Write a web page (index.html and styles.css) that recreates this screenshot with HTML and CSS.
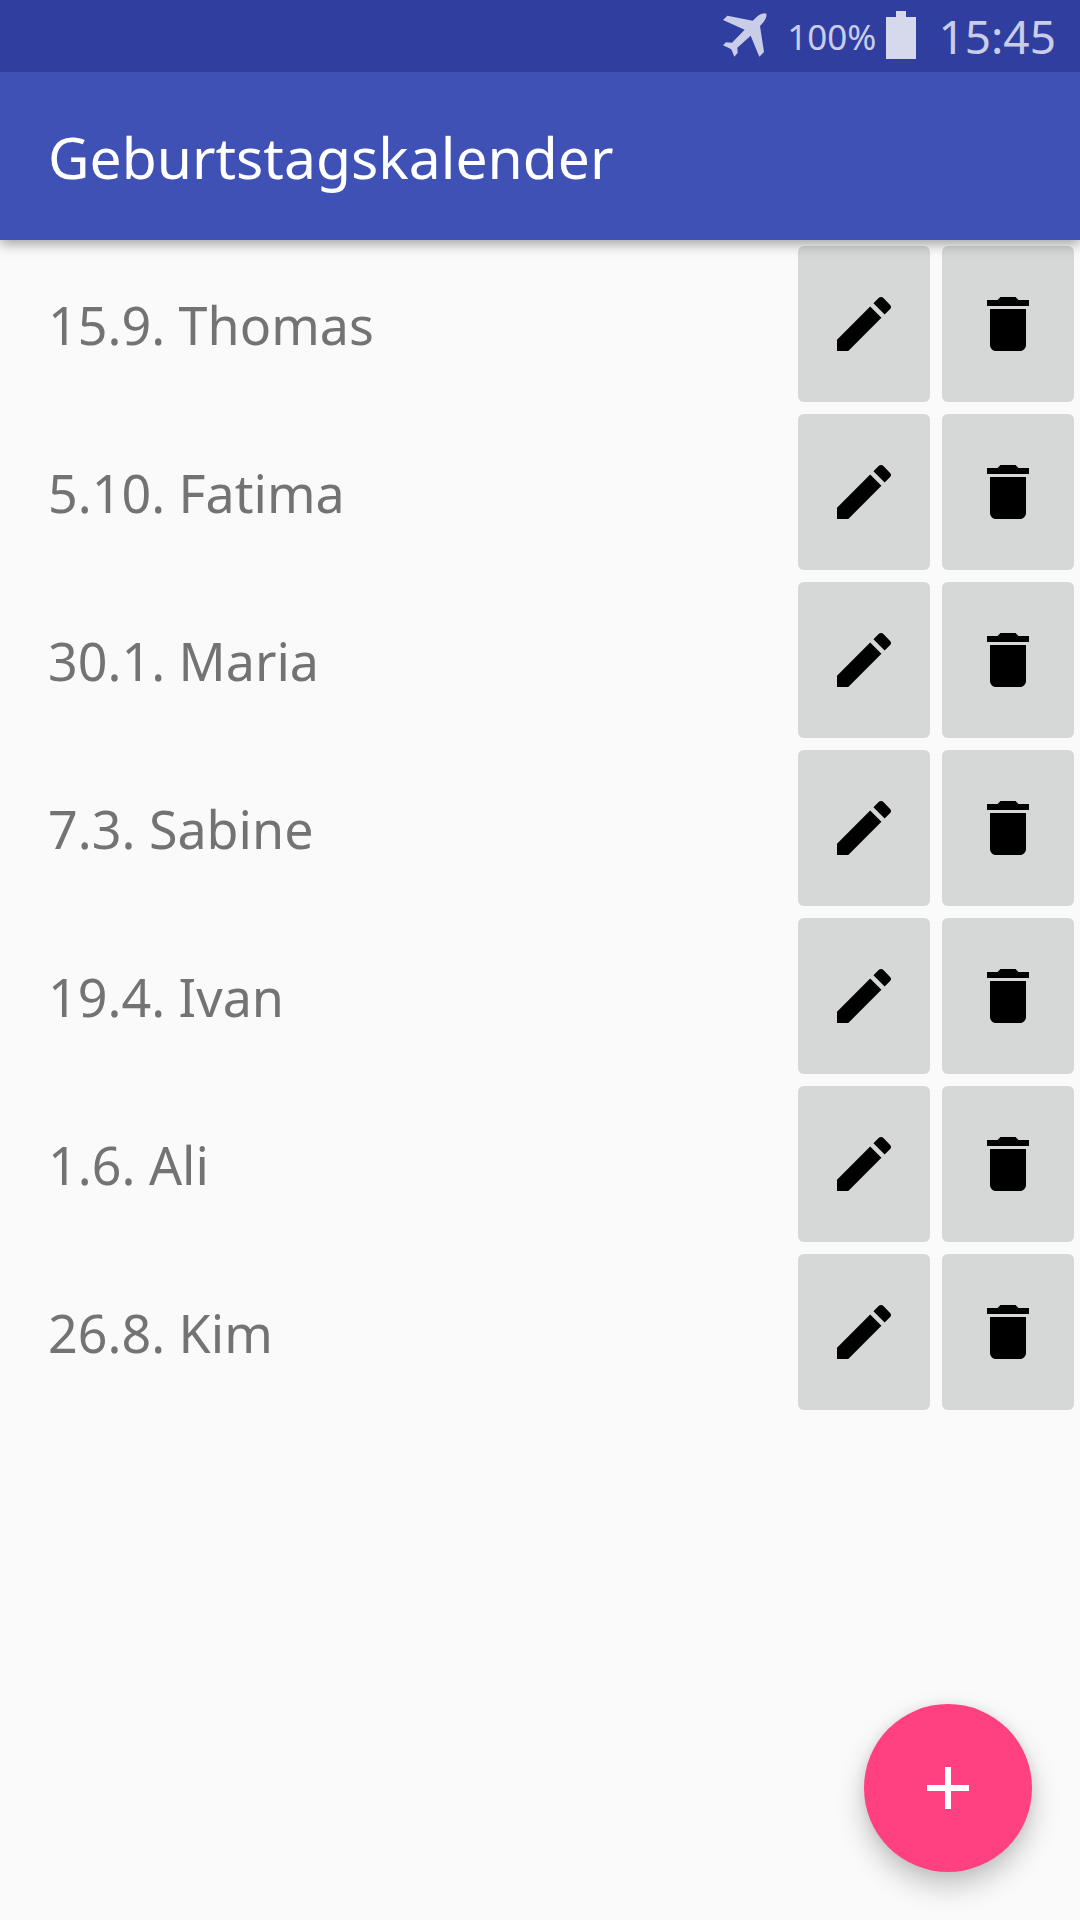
FILE: index.html
```html
<!DOCTYPE html>
<html lang="de">
<head>
<meta charset="utf-8">
<meta name="viewport" content="width=device-width, initial-scale=1">
<title>Geburtstagskalender</title>
<link rel="stylesheet" href="styles.css">
</head>
<body>
<svg class="symbols" aria-hidden="true">
  <symbol id="edit" viewBox="0 0 24 24"><path d="M3 17.25V21h3.75L17.81 9.94l-3.75-3.75L3 17.25zM20.71 7.04c.39-.39.39-1.02 0-1.41l-2.34-2.34c-.39-.39-1.02-.39-1.41 0l-1.83 1.83 3.75 3.75 1.83-1.83z"/></symbol>
  <symbol id="delete" viewBox="0 0 24 24"><path d="M6 19c0 1.1.9 2 2 2h8c1.1 0 2-.9 2-2V7H6v12zM19 4h-3.5l-1-1h-5l-1 1H5v2h14V4z"/></symbol>
</svg>

<div class="status-bar">
  <svg class="airplane" viewBox="93 43 132 132" aria-hidden="true"><path d="M93 64L106 51L182 66L198 51Q213 41 223 45Q226 56 213 72L204 82L216 160L202 174L176 111L136 147L137 163L127 174L119 154L115 150L93 140L102 131L120 132L158 93Z"/></svg>
  <span class="battery-level">100%</span>
  <svg class="battery" viewBox="0 0 30 48" aria-hidden="true"><path d="M10 0h10v6h10v42H0V6h10z"/></svg>
  <span class="clock">15:45</span>
</div>

<header class="app-bar">
  <h1 class="title">Geburtstagskalender</h1>
</header>

<main>
  <ul class="birthdays">
    <li class="birthday">
      <span class="entry">15.9. Thomas</span>
      <button class="action" type="button" aria-label="Bearbeiten"><svg class="icon"><use href="#edit"/></svg></button>
      <button class="action" type="button" aria-label="Löschen"><svg class="icon"><use href="#delete"/></svg></button>
    </li>
    <li class="birthday">
      <span class="entry">5.10. Fatima</span>
      <button class="action" type="button" aria-label="Bearbeiten"><svg class="icon"><use href="#edit"/></svg></button>
      <button class="action" type="button" aria-label="Löschen"><svg class="icon"><use href="#delete"/></svg></button>
    </li>
    <li class="birthday">
      <span class="entry">30.1. Maria</span>
      <button class="action" type="button" aria-label="Bearbeiten"><svg class="icon"><use href="#edit"/></svg></button>
      <button class="action" type="button" aria-label="Löschen"><svg class="icon"><use href="#delete"/></svg></button>
    </li>
    <li class="birthday">
      <span class="entry">7.3. Sabine</span>
      <button class="action" type="button" aria-label="Bearbeiten"><svg class="icon"><use href="#edit"/></svg></button>
      <button class="action" type="button" aria-label="Löschen"><svg class="icon"><use href="#delete"/></svg></button>
    </li>
    <li class="birthday">
      <span class="entry">19.4. Ivan</span>
      <button class="action" type="button" aria-label="Bearbeiten"><svg class="icon"><use href="#edit"/></svg></button>
      <button class="action" type="button" aria-label="Löschen"><svg class="icon"><use href="#delete"/></svg></button>
    </li>
    <li class="birthday">
      <span class="entry">1.6. Ali</span>
      <button class="action" type="button" aria-label="Bearbeiten"><svg class="icon"><use href="#edit"/></svg></button>
      <button class="action" type="button" aria-label="Löschen"><svg class="icon"><use href="#delete"/></svg></button>
    </li>
    <li class="birthday">
      <span class="entry">26.8. Kim</span>
      <button class="action" type="button" aria-label="Bearbeiten"><svg class="icon"><use href="#edit"/></svg></button>
      <button class="action" type="button" aria-label="Löschen"><svg class="icon"><use href="#delete"/></svg></button>
    </li>
  </ul>
</main>

<button class="fab" type="button" aria-label="Hinzufügen">
  <svg class="icon" viewBox="0 0 24 24"><path d="M19 13h-6v6h-2v-6H5v-2h6V5h2v6h6v2z"/></svg>
</button>
</body>
</html>
```
FILE: styles.css
```css
* {
  box-sizing: border-box;
}

body {
  margin: 0;
  min-height: 100vh;
  background: #fafafa;
  font-family: "Noto Sans", sans-serif;
}

.symbols {
  display: none;
}

.status-bar {
  position: relative;
  z-index: 2;
  display: flex;
  align-items: center;
  justify-content: flex-end;
  height: 72px;
  padding: 0 24px 2px 0;
  background: #303f9f;
  color: #c9cde8;
  fill: #c9cde8;
}

.airplane {
  width: 44px;
  height: 44px;
  margin-right: 20px;
}

.battery-level {
  font-size: 35px;
  line-height: 48px;
  padding-top: 4px;
}

.battery {
  width: 30px;
  height: 48px;
  margin: 0 22px 0 10px;
  fill: #d6d9ec;
}

.clock {
  padding-top: 2px;
  font-size: 46px;
  line-height: 64px;
}

.app-bar {
  position: relative;
  z-index: 1;
  display: flex;
  align-items: center;
  height: 168px;
  padding: 2px 48px 0;
  background: #3f51b5;
  box-shadow: 0 4px 12px rgba(0, 0, 0, 0.36);
}

.title {
  margin: 0;
  color: #fff;
  font-size: 57px;
  font-weight: 400;
  line-height: 72px;
}

.birthdays {
  margin: 0;
  padding: 0;
  list-style: none;
}

.birthday {
  display: flex;
  align-items: center;
  gap: 12px;
  padding: 6px 6px 6px 48px;
}

.entry {
  flex: 1;
  padding-top: 2px;
  color: #737373;
  font-size: 52px;
  line-height: 72px;
}

.action {
  display: flex;
  align-items: center;
  justify-content: center;
  width: 132px;
  height: 156px;
  padding: 0;
  border: 0;
  border-radius: 6px;
  background: #d6d7d7;
  color: #000;
  cursor: pointer;
}

.icon {
  width: 72px;
  height: 72px;
  fill: currentColor;
}

.fab {
  position: fixed;
  right: 48px;
  bottom: 48px;
  display: flex;
  align-items: center;
  justify-content: center;
  width: 168px;
  height: 168px;
  padding: 0;
  border: 0;
  border-radius: 50%;
  background: #ff4081;
  color: #fff;
  box-shadow: 0 14px 28px rgba(0, 0, 0, 0.22), 0 0 14px rgba(0, 0, 0, 0.08);
  cursor: pointer;
}
```
